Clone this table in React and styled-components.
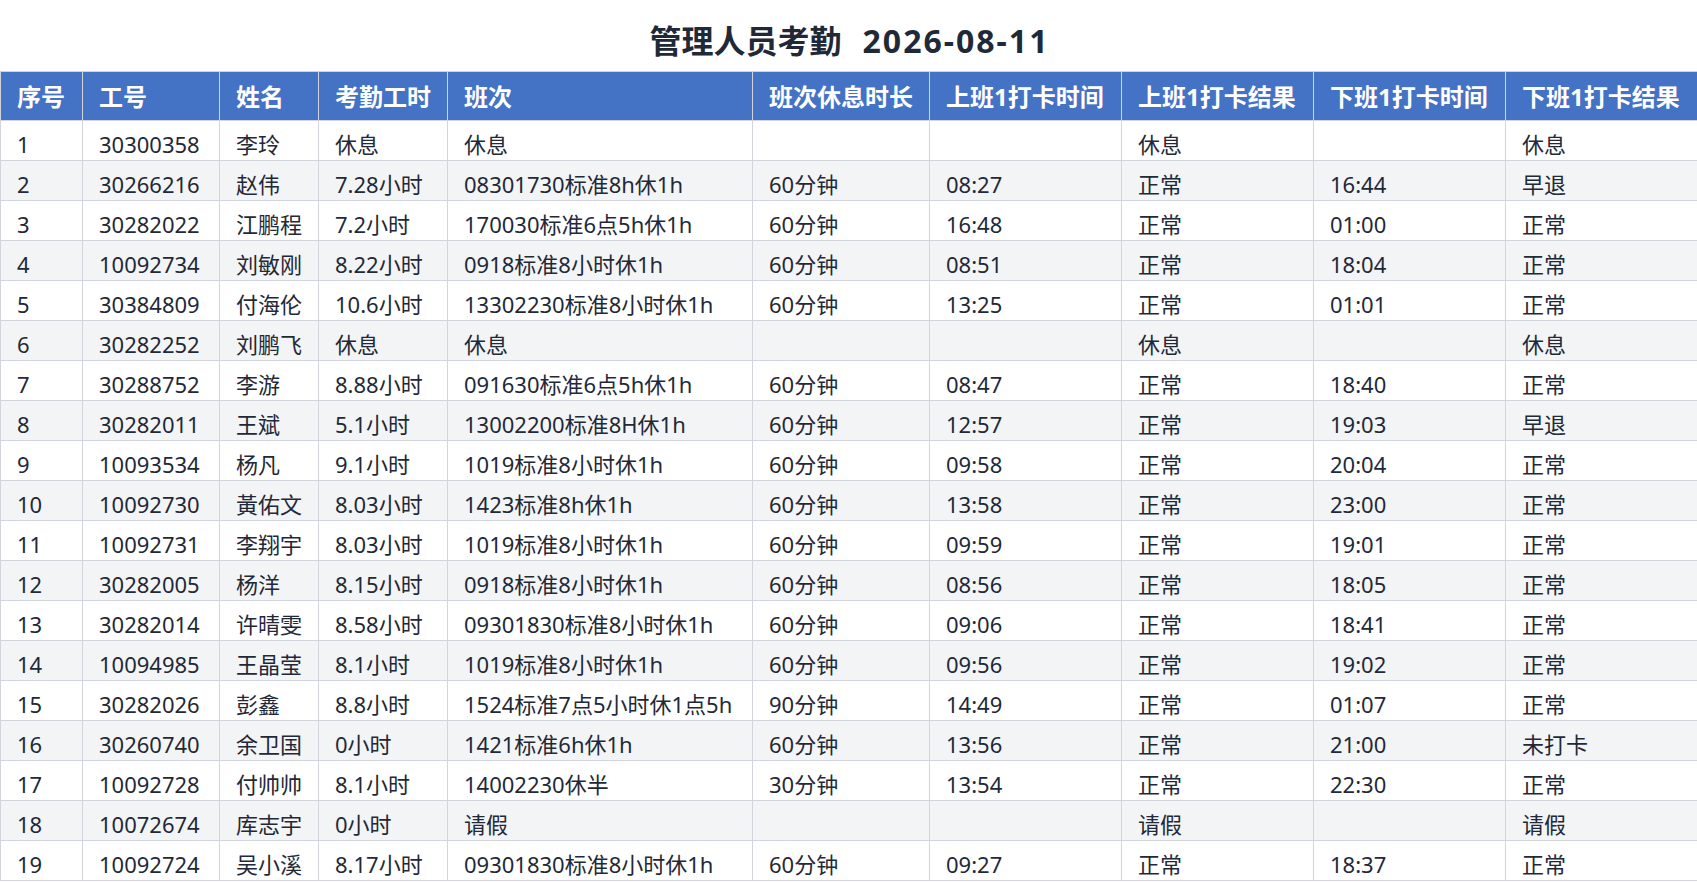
import React from "react";
import styled, { createGlobalStyle } from "styled-components";

const GlobalStyle = createGlobalStyle`
  html, body { margin: 0; padding: 0; background: #ffffff; }
  body {
    font-family: "Noto Sans", "Noto Sans CJK SC", sans-serif;
    color: #1f2937;
  }
`;

const Page = styled.div`
  width: 1697px;
  display: flex;
  flex-direction: column;
`;

const Title = styled.h1`
  margin: 0;
  padding: 21px 0 10px;
  height: 40px;
  line-height: 40px;
  text-align: center;
  font-size: 32px;
  font-weight: 700;
  color: #1f2937;
  font-family: "Noto Sans", "Noto Sans CJK SC", sans-serif;
`;

const DateText = styled.span`
  margin-left: 21px;
  letter-spacing: 2px;
  margin-right: -2px;
`;

const Table = styled.table`
  width: 1697px;
  border-collapse: collapse;
  table-layout: fixed;
  border: 1px solid #d1d5db;
`;

const HeadCell = styled.th`
  height: 49px;
  padding: 2px 16px 0;
  box-sizing: border-box;
  background: #4472c4;
  color: #ffffff;
  font-size: 24px;
  font-weight: 700;
  text-align: left;
  white-space: nowrap;
  border: 1px solid #d1d5db;
  line-height: 30px;
  vertical-align: middle;
`;

const Row = styled.tr`
  background: ${(p) => (p.$even ? "#f3f4f6" : "#ffffff")};
`;

const Cell = styled.td`
  height: 40px;
  padding: 6px 16px 0;
  box-sizing: border-box;
  font-size: 22px;
  line-height: 30px;
  color: #1f2937;
  white-space: nowrap;
  border: 1px solid #d1d5db;
  vertical-align: middle;
`;

const columns = [
  { title: "序号", width: 82 },
  { title: "工号", width: 137 },
  { title: "姓名", width: 99 },
  { title: "考勤工时", width: 129 },
  { title: "班次", width: 305 },
  { title: "班次休息时长", width: 177 },
  { title: "上班1打卡时间", width: 192 },
  { title: "上班1打卡结果", width: 192 },
  { title: "下班1打卡时间", width: 192 },
  { title: "下班1打卡结果", width: 192 },
];

const rows = [
  ["1", "30300358", "李玲", "休息", "休息", "", "", "休息", "", "休息"],
  ["2", "30266216", "赵伟", "7.28小时", "08301730标准8h休1h", "60分钟", "08:27", "正常", "16:44", "早退"],
  ["3", "30282022", "江鹏程", "7.2小时", "170030标准6点5h休1h", "60分钟", "16:48", "正常", "01:00", "正常"],
  ["4", "10092734", "刘敏刚", "8.22小时", "0918标准8小时休1h", "60分钟", "08:51", "正常", "18:04", "正常"],
  ["5", "30384809", "付海伦", "10.6小时", "13302230标准8小时休1h", "60分钟", "13:25", "正常", "01:01", "正常"],
  ["6", "30282252", "刘鹏飞", "休息", "休息", "", "", "休息", "", "休息"],
  ["7", "30288752", "李游", "8.88小时", "091630标准6点5h休1h", "60分钟", "08:47", "正常", "18:40", "正常"],
  ["8", "30282011", "王斌", "5.1小时", "13002200标准8H休1h", "60分钟", "12:57", "正常", "19:03", "早退"],
  ["9", "10093534", "杨凡", "9.1小时", "1019标准8小时休1h", "60分钟", "09:58", "正常", "20:04", "正常"],
  ["10", "10092730", "黃佑文", "8.03小时", "1423标准8h休1h", "60分钟", "13:58", "正常", "23:00", "正常"],
  ["11", "10092731", "李翔宇", "8.03小时", "1019标准8小时休1h", "60分钟", "09:59", "正常", "19:01", "正常"],
  ["12", "30282005", "杨洋", "8.15小时", "0918标准8小时休1h", "60分钟", "08:56", "正常", "18:05", "正常"],
  ["13", "30282014", "许晴雯", "8.58小时", "09301830标准8小时休1h", "60分钟", "09:06", "正常", "18:41", "正常"],
  ["14", "10094985", "王晶莹", "8.1小时", "1019标准8小时休1h", "60分钟", "09:56", "正常", "19:02", "正常"],
  ["15", "30282026", "彭鑫", "8.8小时", "1524标准7点5小时休1点5h", "90分钟", "14:49", "正常", "01:07", "正常"],
  ["16", "30260740", "余卫国", "0小时", "1421标准6h休1h", "60分钟", "13:56", "正常", "21:00", "未打卡"],
  ["17", "10092728", "付帅帅", "8.1小时", "14002230休半", "30分钟", "13:54", "正常", "22:30", "正常"],
  ["18", "10072674", "库志宇", "0小时", "请假", "", "", "请假", "", "请假"],
  ["19", "10092724", "吴小溪", "8.17小时", "09301830标准8小时休1h", "60分钟", "09:27", "正常", "18:37", "正常"],
];

export default function App() {
  return (
    <Page>
      <GlobalStyle />
      <Title>
        管理人员考勤<DateText>2026-08-11</DateText>
      </Title>
      <Table>
        <colgroup>
          {columns.map((c) => (
            <col key={c.title} style={{ width: c.width }} />
          ))}
        </colgroup>
        <thead>
          <tr>
            {columns.map((c) => (
              <HeadCell key={c.title}>{c.title}</HeadCell>
            ))}
          </tr>
        </thead>
        <tbody>
          {rows.map((r, i) => (
            <Row key={r[0]} $even={i % 2 === 1}>
              {r.map((v, j) => (
                <Cell key={j}>{v}</Cell>
              ))}
            </Row>
          ))}
        </tbody>
      </Table>
    </Page>
  );
}
